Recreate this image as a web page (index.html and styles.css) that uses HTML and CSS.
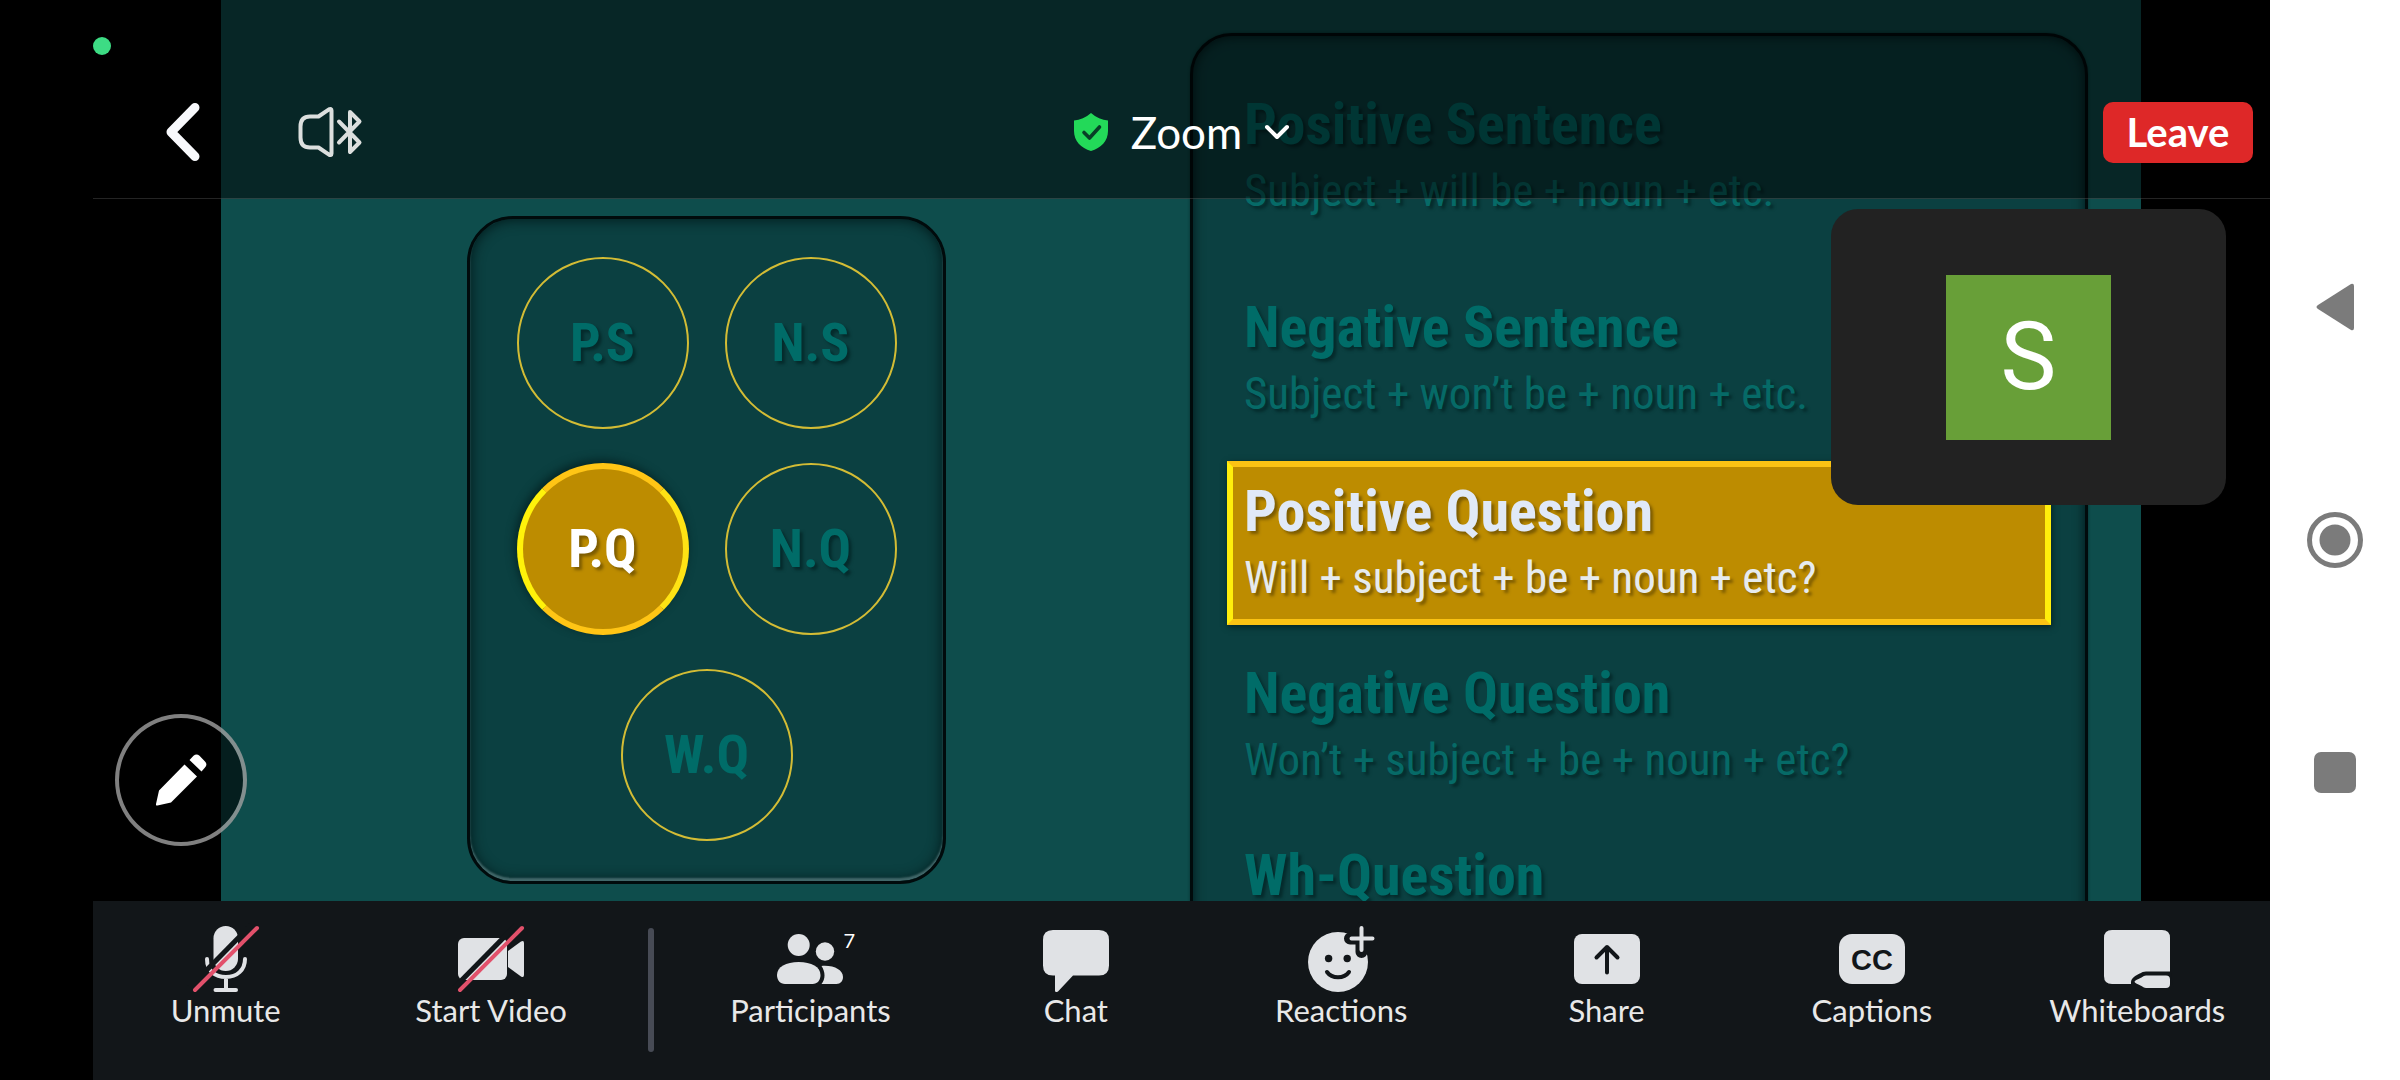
FILE: index.html
```
<!DOCTYPE html>
<html lang="en">
<head>
<meta charset="utf-8">
<meta name="viewport" content="width=device-width, initial-scale=1">
<title>Zoom</title>
<link rel="stylesheet" href="styles.css">
</head>
<body>
<div class="device">
  <div class="app">
    <span class="privacy-dot"></span>
    <main class="stage">
      <section class="slide">
        <div class="panel picker">
          <button class="pick" type="button">P.S</button>
          <button class="pick" type="button">N.S</button>
          <button class="pick active" type="button">P.Q</button>
          <button class="pick" type="button">N.Q</button>
          <button class="pick flat" type="button">W.Q</button>
        </div>
        <ul class="panel formulas">
          <li class="formula first"><h2>Positive Sentence</h2><p>Subject + will be + noun + etc.</p></li>
          <li class="formula"><h2>Negative Sentence</h2><p>Subject + won’t be + noun + etc.</p></li>
          <li class="formula active"><h2>Positive Question</h2><p>Will + subject + be + noun + etc?</p></li>
          <li class="formula"><h2>Negative Question</h2><p>Won’t + subject + be + noun + etc?</p></li>
          <li class="formula"><h2>Wh-Question</h2></li>
        </ul>
      </section>

      <header class="topbar">
        <div class="top-left">
          <button type="button" aria-label="Back">
            <svg width="34" height="58" viewBox="0 0 34 58"><path d="M29 4.500L5 29l24 24.500" fill="none" stroke="#f8f9fc" stroke-width="9" stroke-linecap="round" stroke-linejoin="round"/></svg>
          </button>
          <button type="button" aria-label="Audio output">
            <svg width="64" height="52" viewBox="0 0 64 52" fill="none" stroke="#dcdfde" stroke-width="4" stroke-linejoin="round" stroke-linecap="round"><path d="M33.500 4.500c0-1.500-1-2-2.500-1.200L20.500 10.500H12q-9.500 0-9.500 10v11q0 10 9.500 10h8.500L31 48.700c1.500.8 2.500.3 2.500-1.200z"/><path d="M41 15.500l20.500 21L52 46V6l9.500 9.500L41 36.500"/></svg>
          </button>
        </div>
        <button class="meeting" type="button">
          <svg width="36" height="40" viewBox="0 0 36 40"><path d="M18 1C23 5.500 29 8 35 8.500V19c0 10-7 17-17 20C8 36 1 29 1 19V8.500C7 8 13 5.500 18 1z" fill="#23d959"/><path d="M11 20.500l5.500 5.500L26.500 15" fill="none" stroke="#083f27" stroke-width="3.600" stroke-linecap="round" stroke-linejoin="round"/></svg>
          <span>Zoom</span>
          <svg width="26" height="18" viewBox="0 0 26 18"><path d="M3 4l10 10L23 4" fill="none" stroke="#fff" stroke-width="4" stroke-linecap="round" stroke-linejoin="round"/></svg>
        </button>
        <button class="leave" type="button">Leave</button>
      </header>

      <div class="self-view"><div class="avatar">S</div></div>

      <button class="annotate" type="button" aria-label="Annotate">
        <svg width="52" height="52" viewBox="0 0 52 52" fill="#fff"><path d="M29.500 10.500L42 22.500 16 48.500 2.500 51.500Q.5 52 1 50L4 36.500z"/><path d="M34.500 6l4-4.200q3-2.700 6 0l5.500 5.700q2.800 3 0 6L46.500 17.500z"/></svg>
      </button>
    </main>

    <nav class="toolbar">
      <button class="tool" type="button">
        <svg width="66" height="66" viewBox="0 0 66 66"><g stroke="#e0e2e5" fill="none" stroke-width="4" stroke-linecap="round"><rect x="20.500" width="24.500" height="45" rx="12.200" fill="#e0e2e5" stroke="none"/><path d="M14 33c0 12 8 18 19 18s19-7 19-18M33 51v12M22.500 64h20.500"/></g><path d="M-3.500 61.500L58-1" stroke="#121619" stroke-width="5"/><path d="M2 64L64 2" stroke="#e2516b" stroke-width="4" stroke-linecap="round"/></svg>
        <span>Unmute</span>
      </button>
      <button class="tool" type="button">
        <svg width="66" height="66" viewBox="0 0 66 66"><g fill="#e0e2e5"><rect y="12" width="49" height="42" rx="6"/><path d="M50 25L63 15.500q3-1.500 3 1.500v32q0 3-3 1.500L50 41z"/></g><path d="M-3.500 61.500L58-1" stroke="#121619" stroke-width="5"/><path d="M2 64L64 2" stroke="#e2516b" stroke-width="4" stroke-linecap="round"/></svg>
        <span>Start Video</span>
      </button>
      <span class="divider"></span>
      <button class="tool" type="button">
        <span class="icon-wrap">
          <svg width="66" height="66" viewBox="0 0 66 66" fill="#e0e2e5"><circle cx="21.700" cy="19" r="11"/><circle cx="48" cy="25.500" r="9.200"/><path d="M0 49C0 41 9 36 21.700 36S43.500 41 43.500 49c0 5-3 9-8 9H8c-5 0-8-4-8-9z"/><path d="M44.500 40C57 39 66 44 66 51c0 4-2.500 7-6.500 7H44.500c4-5 4-12 0-18z"/></svg>
          <span class="count">7</span>
        </span>
        <span>Participants</span>
      </button>
      <button class="tool" type="button">
        <svg width="66" height="66" viewBox="0 0 66 66" fill="#e0e2e5"><path d="M10 4h46q10 0 10 10v25.500q0 10-10 10H30L15 65.500q-3 1.500-3-1V49.500H10q-10 0-10-10V14Q0 4 10 4z"/></svg>
        <span>Chat</span>
      </button>
      <button class="tool" type="button">
        <svg width="66" height="66" viewBox="0 0 66 66"><circle cx="30" cy="36" r="30" fill="#e0e2e5"/><path d="M53.500 2v24M42 12.500h23" stroke="#121619" stroke-width="12" stroke-linecap="round"/><path d="M53.500 2v22M43.500 12.500h21" stroke="#e0e2e5" stroke-width="4" stroke-linecap="round"/><g fill="#121619"><circle cx="20.600" cy="32.500" r="3.700"/><circle cx="39.200" cy="32.500" r="3.700"/></g><path d="M19 46c5 7 17 7 22 0" fill="none" stroke="#121619" stroke-width="4" stroke-linecap="round"/></svg>
        <span>Reactions</span>
      </button>
      <button class="tool" type="button">
        <svg width="66" height="66" viewBox="0 0 66 66"><rect y="8" width="66" height="50" rx="8" fill="#e0e2e5"/><path d="M33 46.500V21M22.500 31.500L33 21l10.500 10.500" fill="none" stroke="#121619" stroke-width="4" stroke-linecap="round" stroke-linejoin="round"/></svg>
        <span>Share</span>
      </button>
      <button class="tool" type="button">
        <svg width="66" height="66" viewBox="0 0 66 66"><rect y="8" width="66" height="50" rx="13" fill="#e0e2e5"/><text class="cc" x="33" y="43.500" text-anchor="middle">CC</text></svg>
        <span>Captions</span>
      </button>
      <button class="tool" type="button">
        <svg width="66" height="66" viewBox="0 0 66 66"><path d="M8 4h50q8 0 8 8v46H8q-8 0-8-8V12Q0 4 8 4z" fill="#e0e2e5"/><path d="M66 46.500H42q-3 0-6 2-8 4-8 7.500T28 60h40z" fill="#121619" stroke="#121619" stroke-width="2"/><path d="M42 49.500h20q4 0 4 4v4.500q0 4-4 4H42q-2 0-4.500-2-7-3-7-4.200t7-4.300q2.500-2 4.500-2z" fill="#e0e2e5"/></svg>
        <span>Whiteboards</span>
      </button>
    </nav>
  </div>

  <nav class="system-nav">
    <button type="button" aria-label="System back"><svg width="40" height="50" viewBox="0 0 40 50"><path d="M3 23L36 2q3-1 3 2v42q0 3-3 2L3 27q-3-2 0-4z" fill="#7b7b7b"/></svg></button>
    <button type="button" aria-label="Home"><svg width="58" height="58" viewBox="0 0 58 58"><circle cx="29" cy="29" r="25.500" fill="none" stroke="#7b7b7b" stroke-width="5"/><circle cx="29" cy="29" r="15.500" fill="#7b7b7b"/></svg></button>
    <button type="button" aria-label="Recent apps"><svg width="42" height="42" viewBox="0 0 42 42"><rect width="42" height="41" rx="7" fill="#7b7b7b"/></svg></button>
  </nav>
</div>
</body>
</html>
```
FILE: styles.css
```
* { box-sizing: border-box; }
body { margin: 0; background: #000; }
button { border: 0; padding: 0; background: none; color: inherit; font: inherit; cursor: pointer; }
svg { display: block; overflow: visible; }
h2, p, ul { margin: 0; padding: 0; }

.device { display: flex; min-height: 100vh; padding-left: 93px; }
.app { position: relative; flex: 1; min-width: 0; display: grid; grid-template-rows: 1fr auto; font-family: Lato, "Noto Sans", sans-serif; color: #fff; }
.privacy-dot { position: absolute; z-index: 3; left: 0; top: 37px; width: 18px; height: 18px; border-radius: 50%; background: #3ddc84; }

/* Shared slide */
.stage { position: relative; display: flex; padding: 0 129px 0 128px; overflow: hidden; }
.slide { flex: 1; display: grid; grid-template-columns: 246fr 479fr 244fr 898fr 53fr; background: #0e4d4c; height: calc(100vh - 179px); min-height: 700px; overflow: hidden; font-family: "Liberation Sans Narrow", "Roboto Condensed", "Open Sans Condensed", "Liberation Sans", sans-serif; color: #006c68; }
.panel { background: #0b4041; border: 3px solid #010b0c; box-shadow: inset 0 0 12px #021617, 0 0 3px #06302f; }
.picker { grid-column: 2; margin: 216px 0 17px; padding: 38px 46px; border-radius: 46px; box-shadow: inset 0 -3px 2px #42686a, inset 0 0 14px #021617; display: flex; flex-wrap: wrap; justify-content: center; align-content: flex-start; gap: 34px 36px; }
.pick { width: 172px; height: 172px; border-radius: 50%; border: 2px solid #d3bc35; font-size: 54px; line-height: 60px; font-weight: 700; text-shadow: 3px 3px 3px #052b2c; }
.pick.flat { text-shadow: none; }
.pick.active { border: 6px solid #ffe314; border-top-color: #ffc515; border-bottom-color: #ffc515; border-left-color: #fff20a; background: #bd8c00; color: #fff; box-shadow: -2px -3px 10px #042425; text-shadow: 3px 3px 3px #7d5c00; }
.formulas { grid-column: 4; list-style: none; margin-top: 33px; margin-bottom: -140px; padding: 38px 34px 0; border-radius: 42px; display: flex; flex-direction: column; gap: 18px; }
.formula { flex: none; height: 164px; border: 6px solid transparent; padding: 8px 11px; white-space: nowrap; text-shadow: 3px 3px 3px #052b2c; }
.formula.first { margin-bottom: 21px; }
.formula h2 { font-size: 58px; line-height: 72px; font-weight: 700; }
.formula p { font-size: 45px; line-height: 62px; color: #066a67; }
.formula.active { margin-top: 2px; border-color: #fbc314 #ffee0c; background: #bd8c00; box-shadow: 1px 2px 6px #042425; text-shadow: 3px 3px 3px #7d5c00; color: #e0e9f7; }
.formula.active p { color: #e6ebee; }

/* Meeting header */
.topbar { position: absolute; inset: 0 0 auto 0; height: 199px; padding: 66px 17px 0; display: grid; grid-template-columns: 1fr auto 1fr; background: rgba(0, 0, 0, .5); border-bottom: 1px solid rgba(255, 255, 255, .14); }
.top-left { display: flex; align-items: center; gap: 98px; padding-left: 56px; }
.meeting { display: flex; align-items: center; gap: 22px; font-size: 44px; line-height: 52px; }
.leave { place-self: center end; width: 150px; height: 61px; border-radius: 10px; background: #de2828; color: #fff; font-size: 40px; line-height: 48px; font-weight: 700; }

/* Floating overlays */
.self-view { position: absolute; right: 44px; top: 209px; width: 395px; height: 296px; border-radius: 27px; background: #222; display: grid; place-items: center; }
.avatar { width: 165px; height: 165px; background: #689f38; text-align: center; font: 400 94px/165px Roboto, sans-serif; }
.annotate { position: absolute; left: 22px; bottom: 55px; width: 132px; height: 132px; border-radius: 50%; border: 4px solid rgba(255, 255, 255, .5); background: rgba(0, 0, 0, .6); display: grid; place-items: center; }

/* Bottom toolbar */
.toolbar { display: flex; align-items: flex-start; height: 179px; padding-top: 25px; background: #121619; color: #e8e8e8; }
.tool { flex: 1 1 0; min-width: 0; display: flex; flex-direction: column; align-items: center; font-size: 31px; line-height: 36px; }
.divider { flex: none; width: 6px; height: 124px; margin: 2px 24px 0; border-radius: 3px; background: #474b55; }
.icon-wrap { position: relative; }
.count { position: absolute; left: 66px; top: 2px; font-size: 20px; line-height: 24px; color: #fff; }
.cc { font: 700 29px "Liberation Sans", sans-serif; fill: #121619; }

/* Android navigation rail */
.system-nav { width: 130px; background: #fff; display: flex; flex-direction: column; justify-content: center; gap: 175px; align-items: center; }
.system-nav button { width: 58px; height: 58px; display: grid; place-items: center; }
```
